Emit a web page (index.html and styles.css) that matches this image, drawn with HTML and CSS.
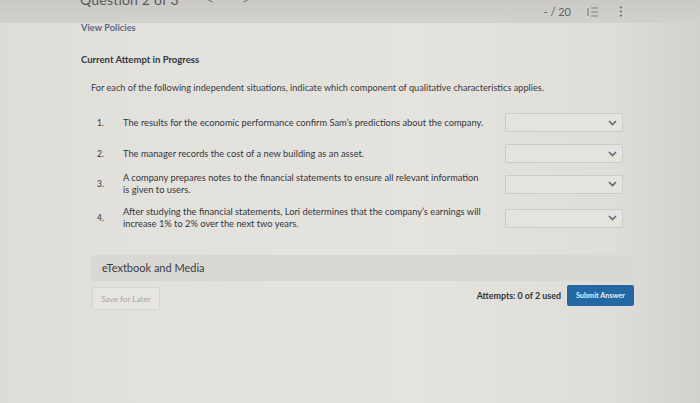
FILE: index.html
```html
<!DOCTYPE html>
<html lang="en">
<head>
<meta charset="utf-8">
<title>Question 2 of 3</title>
<link rel="stylesheet" href="styles.css">
</head>
<body>
<header class="topbar">
  <div class="topbar-left">
    <span class="qtitle">Question 2 of 3</span>
    <span class="nav-arrow">&lt;</span>
    <span class="nav-arrow">&gt;</span>
  </div>
  <div class="topbar-right">
    <span class="score">- / 20</span>
    <svg class="icon-list" width="12" height="10" viewBox="0 0 12 10"><path d="M1 1v8M4 1h7M4 5h7M4 9h7" stroke="#7c7f86" stroke-width="1.2" fill="none"/></svg>
    <svg class="icon-kebab" width="4" height="11" viewBox="0 0 4 11"><circle cx="2" cy="1.5" r="1.1" fill="#6e7178"/><circle cx="2" cy="5.5" r="1.1" fill="#6e7178"/><circle cx="2" cy="9.5" r="1.1" fill="#6e7178"/></svg>
  </div>
</header>
<main class="content">
  <a class="policies">View Policies</a>
  <h2 class="attempt">Current Attempt in Progress</h2>
  <p class="prompt">For each of the following independent situations, indicate which component of qualitative characteristics applies.</p>
  <div class="items">
    <div class="item r1">
      <span class="num">1.</span>
      <span class="text single">The results for the economic performance confirm Sam’s predictions about the company.</span>
      <div class="select"><svg width="9" height="6" viewBox="0 0 9 6"><path d="M1 1l3.5 3.5L8 1" stroke="#626878" stroke-width="1.6" fill="none"/></svg></div>
    </div>
    <div class="item r2">
      <span class="num">2.</span>
      <span class="text single">The manager records the cost of a new building as an asset.</span>
      <div class="select"><svg width="9" height="6" viewBox="0 0 9 6"><path d="M1 1l3.5 3.5L8 1" stroke="#626878" stroke-width="1.6" fill="none"/></svg></div>
    </div>
    <div class="item r3">
      <span class="num">3.</span>
      <span class="text">A company prepares notes to the financial statements to ensure all relevant information is given to users.</span>
      <div class="select"><svg width="9" height="6" viewBox="0 0 9 6"><path d="M1 1l3.5 3.5L8 1" stroke="#626878" stroke-width="1.6" fill="none"/></svg></div>
    </div>
    <div class="item r4">
      <span class="num">4.</span>
      <span class="text">After studying the financial statements, Lori determines that the company’s earnings will increase 1% to 2% over the next two years.</span>
      <div class="select"><svg width="9" height="6" viewBox="0 0 9 6"><path d="M1 1l3.5 3.5L8 1" stroke="#626878" stroke-width="1.6" fill="none"/></svg></div>
    </div>
  </div>
  <div class="media-bar">eTextbook and Media</div>
  <div class="actions">
    <button class="save">Save for Later</button>
    <div class="submit-group">
      <span class="attempts">Attempts: 0 of 2 used</span>
      <button class="submit">Submit Answer</button>
    </div>
  </div>
</main>
</body>
</html>
```
FILE: styles.css
```css
* { box-sizing: border-box; }
html, body { margin: 0; padding: 0; }
body {
  width: 700px;
  height: 403px;
  overflow: hidden;
  font-family: Lato, "Open Sans", sans-serif;
  color: #3b3d42;
  background: linear-gradient(90deg, #dddcd7 0%, #e2e1dc 20%, #e4e3de 60%, #dfddd8 88%, #d3d1cc 100%);
}
.topbar {
  height: 23px;
  display: flex;
  justify-content: space-between;
  align-items: flex-start;
  background: linear-gradient(180deg, #cbc9c4 0%, #d3d1cc 100%);
  padding: 0 77px 0 80px;
}
.topbar-left {
  display: flex;
  gap: 28px;
  margin-top: -9px;
  font-size: 14px;
  color: #55575d;
}
.nav-arrow { color: #6b6d72; font-size: 12px; margin-top: 1px; }
.qtitle { letter-spacing: 0.2px; }
.topbar-right {
  display: flex;
  align-items: center;
  margin-top: 5px;
  font-size: 11px;
  color: #5f6167;
}
.score { margin-right: 16px; }
.icon-list { margin-right: 20px; }
.content {
  padding: 0 66px 0 81px;
}
.policies {
  display: block;
  font-size: 9.3px;
  font-weight: 700;
  color: #606886;
  line-height: 10px;
}
.attempt {
  margin: 21px 0 0;
  font-size: 9.5px;
  font-weight: 700;
  line-height: 12px;
  color: #34363b;
}
.prompt {
  margin: 16px 0 0 10px;
  font-size: 9.2px;
  line-height: 11px;
  color: #393b40;
  white-space: nowrap;
}
.items {
  margin: 20px 0 0 16px;
  display: flex;
  flex-direction: column;
}
.item {
  display: grid;
  grid-template-columns: 26px 382px 118px;
  align-items: center;
  font-size: 9.3px;
  line-height: 12px;
  color: #34363b;
}
.item .text { padding-right: 22px; }
.item .text.single { white-space: nowrap; padding-right: 0; }
.item .num { font-size: 8.5px; }
.r2 { margin-top: 12px; }
.r3 { margin-top: 9px; }
.r4 { margin-top: 10px; }
.select {
  height: 19px;
  border: 1px solid #cccbc5;
  background: #e4e3de;
  border-radius: 1px;
  display: flex;
  justify-content: flex-end;
  align-items: center;
  padding-right: 5px;
}
.media-bar {
  margin: 25px 0 0 10px;
  width: 543px;
  height: 26px;
  background: #d9d8d3;
  border-radius: 3px;
  font-size: 11px;
  line-height: 26px;
  padding-left: 11px;
  color: #3a3c41;
}
.actions {
  margin: 4px 0 0 11px;
  width: 542px;
  display: flex;
  justify-content: space-between;
  align-items: flex-start;
}
.save {
  height: 23px;
  width: 68px;
  margin-top: 2px;
  border: 1px solid #d6d5d0;
  background: #e6e5e0;
  border-radius: 2px;
  font-family: Lato, sans-serif;
  font-size: 8.2px;
  color: #a6a5a0;
  padding: 0;
}
.submit-group {
  display: flex;
  align-items: center;
  gap: 6px;
}
.attempts {
  font-size: 8.9px;
  font-weight: 700;
  color: #2f3136;
}
.submit {
  width: 67px;
  height: 21px;
  border: none;
  border-radius: 2px;
  background: #2368a3;
  color: #e6eef6;
  font-family: Lato, sans-serif;
  font-size: 7.3px;
  font-weight: 700;
  padding: 0;
}
```
